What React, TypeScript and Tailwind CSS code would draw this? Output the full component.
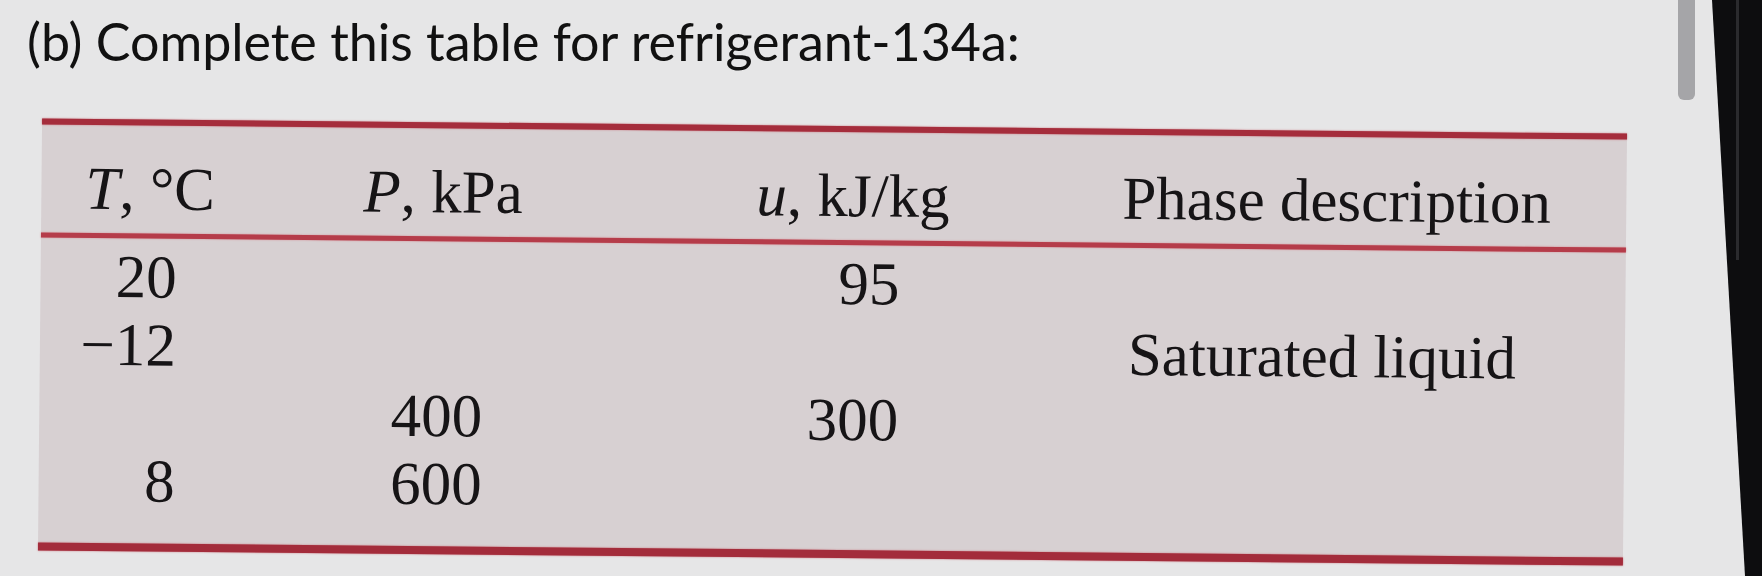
import React from "react";

const serif = { fontFamily: '"Liberation Serif", "Times New Roman", serif' };

type Row = { t?: string; p?: string; u?: string; phase?: string };

const rows: Row[] = [
  { t: "20", u: "95" },
  { t: "\u221212", phase: "Saturated liquid" },
  { p: "400", u: "300" },
  { t: "8", p: "600" },
];

export default function App() {
  return (
    <div className="relative flex h-[576px] w-[1762px] overflow-hidden bg-[#e6e6e7]">
      <div className="flex w-[1712px] flex-col">
        <h1
          className="ml-[27px] mt-[15px] whitespace-nowrap text-[52px] font-normal leading-none text-[#111111]"
          style={{ fontFamily: 'Lato, "Open Sans", sans-serif' }}
        >
          (b) Complete this table for refrigerant-134a:
        </h1>

        <div
          className="ml-[40px] mt-[59px] w-[1585px] rotate-[0.55deg] bg-[#d7d0d2] text-[61px] leading-none text-[#161416]"
          style={serif}
        >
          <div className="h-[6px] bg-[#a52d3c] shadow-[0_0_2px_#c9707a]" />
          <div className="flex h-[108px] items-start whitespace-nowrap pt-[33px]">
            <div className="w-[278px] pl-[44px]">
              <span className="italic">T</span>, °C
            </div>
            <div className="w-[400px] pl-[44px]">
              <span className="italic">P</span>, kPa
            </div>
            <div className="w-[390px] pl-[37px]">
              <span className="italic">u</span>, kJ/kg
            </div>
            <div className="flex-1 pl-[13px]">Phase description</div>
          </div>
          <div className="h-[5px] bg-[#b53c4a] shadow-[0_0_2px_#d68890]" />
          <div className="flex flex-col pb-[29px] pt-[4px]">
            {rows.map((r, i) => (
              <div key={i} className="flex h-[68px] items-center whitespace-nowrap">
                <div className="w-[278px]">
                  <div className="w-[136px] text-right">{r.t ?? ""}</div>
                </div>
                <div className="w-[400px]">
                  <div className="w-[165px] text-right">{r.p ?? ""}</div>
                </div>
                <div className="w-[390px]">
                  <div className="w-[181px] text-right">{r.u ?? ""}</div>
                </div>
                <div className="flex-1 pl-[20px]">{r.phase ?? ""}</div>
              </div>
            ))}
          </div>
          <div className="h-[8px] bg-[#a32c3b] shadow-[0_0_2px_#c9707a]" />
        </div>
      </div>

      <div className="absolute left-[1678px] top-0 h-[100px] w-[17px] rounded-b-[6px] bg-[#a5a5a8]" />

      <div className="flex-1 bg-[#0d0d0f] [clip-path:polygon(0_0,100%_0,100%_100%,33px_100%)]">
        <div className="ml-[24px] h-[260px] w-[3px] bg-[#2b2b2e]" />
      </div>
    </div>
  );
}
